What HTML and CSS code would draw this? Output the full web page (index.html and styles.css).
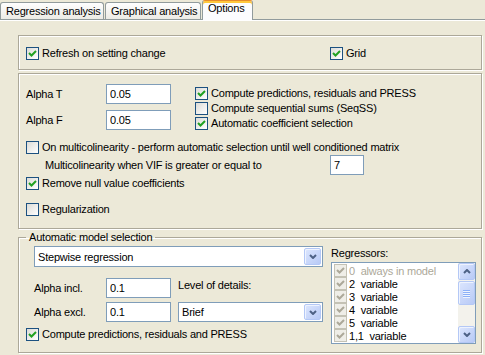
FILE: index.html
```html
<!DOCTYPE html>
<html lang="en">
<head>
    <meta charset="UTF-8">
    <title>Options</title>
    <link rel="stylesheet" href="styles.css">
</head>
<body>
    <div class="tabs">
        <div class="tab tab-reg">Regression analysis</div>
        <div class="tab tab-graph">Graphical analysis</div>
        <div class="tab tab-options active">Options</div>
    </div>

    <div class="panel">
        <!-- 上段 -->
        <div class="group group-top">
            <label class="check check-refresh"><span class="cb"><svg viewBox="0 0 11 11"><path d="M2 5l2.5 2.5L9 3" /></svg></span>Refresh on setting change</label>
            <label class="check"><span class="cb"><svg viewBox="0 0 11 11"><path d="M2 5l2.5 2.5L9 3" /></svg></span>Grid</label>
        </div>

        <!-- 回帰の設定 -->
        <div class="group group-regr">
            <div class="alpha-row">
                <div class="alpha-col">
                    <div class="field-row">
                        <span class="field-label">Alpha T</span>
                        <input class="edit alpha-edit" type="text" value="0.05">
                    </div>
                    <div class="field-row">
                        <span class="field-label">Alpha F</span>
                        <input class="edit alpha-edit" type="text" value="0.05">
                    </div>
                </div>
                <div class="check-col">
                    <label class="check"><span class="cb"><svg viewBox="0 0 11 11"><path d="M2 5l2.5 2.5L9 3" /></svg></span>Compute predictions, residuals and PRESS</label>
                    <label class="check"><span class="cb"></span>Compute sequential sums (SeqSS)</label>
                    <label class="check"><span class="cb"><svg viewBox="0 0 11 11"><path d="M2 5l2.5 2.5L9 3" /></svg></span>Automatic coefficient selection</label>
                </div>
            </div>
            <label class="check multicol"><span class="cb"></span>On multicolinearity - perform automatic selection until well conditioned matrix</label>
            <div class="vif-row">
                <span class="vif-label">Multicolinearity when VIF is greater or equal to</span>
                <input class="edit vif-edit" type="text" value="7">
            </div>
            <label class="check remove-null"><span class="cb"><svg viewBox="0 0 11 11"><path d="M2 5l2.5 2.5L9 3" /></svg></span>Remove null value coefficients</label>
            <label class="check regular"><span class="cb"></span>Regularization</label>
        </div>

        <!-- 自動モデル選択 -->
        <fieldset class="group-model">
            <legend>Automatic model selection</legend>
            <div class="model-left">
                <div class="combo combo-method">
                    <span class="combo-text">Stepwise regression</span>
                    <span class="sb-btn combo-btn"><svg viewBox="0 0 8 5"><path d="M1 1l3 3l3 -3" /></svg></span>
                </div>
                <div class="field-row model-row first">
                    <span class="field-label model-label">Alpha incl.</span>
                    <input class="edit alpha-edit" type="text" value="0.1">
                    <span class="details-label">Level of details:</span>
                </div>
                <div class="field-row model-row">
                    <span class="field-label model-label">Alpha excl.</span>
                    <input class="edit alpha-edit" type="text" value="0.1">
                    <div class="combo combo-details">
                        <span class="combo-text">Brief</span>
                        <span class="sb-btn combo-btn"><svg viewBox="0 0 8 5"><path d="M1 1l3 3l3 -3" /></svg></span>
                    </div>
                </div>
                <label class="check compute-model"><span class="cb"><svg viewBox="0 0 11 11"><path d="M2 5l2.5 2.5L9 3" /></svg></span>Compute predictions, residuals and PRESS</label>
            </div>
            <div class="model-right">
                <div class="regr-label">Regressors:</div>
                <div class="listbox">
                    <div class="list-items">
                        <div class="list-item fixed"><span class="cb cb-grey"><svg viewBox="0 0 11 11"><path d="M2 5l2.5 2.5L9 3" /></svg></span>0  always in model</div>
                        <div class="list-item"><span class="cb cb-grey"><svg viewBox="0 0 11 11"><path d="M2 5l2.5 2.5L9 3" /></svg></span>2  variable</div>
                        <div class="list-item"><span class="cb cb-grey"><svg viewBox="0 0 11 11"><path d="M2 5l2.5 2.5L9 3" /></svg></span>3  variable</div>
                        <div class="list-item"><span class="cb cb-grey"><svg viewBox="0 0 11 11"><path d="M2 5l2.5 2.5L9 3" /></svg></span>4  variable</div>
                        <div class="list-item"><span class="cb cb-grey"><svg viewBox="0 0 11 11"><path d="M2 5l2.5 2.5L9 3" /></svg></span>5  variable</div>
                        <div class="list-item"><span class="cb cb-grey"><svg viewBox="0 0 11 11"><path d="M2 5l2.5 2.5L9 3" /></svg></span>1,1  variable</div>
                    </div>
                    <div class="scrollbar">
                        <span class="sb-btn"><svg viewBox="0 0 8 5"><path d="M1 4l3 -3l3 3" /></svg></span>
                        <span class="sb-btn sb-thumb"><i></i><i></i><i></i><i></i></span>
                        <span class="sb-track"></span>
                        <span class="sb-btn"><svg viewBox="0 0 8 5"><path d="M1 1l3 3l3 -3" /></svg></span>
                    </div>
                </div>
            </div>
        </fieldset>
    </div>
</body>
</html>
```

FILE: styles.css
```css
/* 全体 */
* {
    box-sizing: border-box;
}
body {
    margin: 0;
    width: 485px;
    height: 355px;
    overflow: hidden;
    background-color: #ECE9D8; /* XPのベージュ */
    font-family: "Liberation Sans", Arial, sans-serif;
    font-size: 11px;
    letter-spacing: -0.2px;
    color: #000;
}

/* タブ */
.tabs {
    display: flex;
    align-items: flex-end;
    gap: 1px;
    height: 19px;
    position: relative;
    z-index: 1;
}
.tab {
    height: 17px;
    border: 1px solid #919B9C;
    border-bottom: none;
    border-radius: 3px 3px 0 0;
    background: linear-gradient(#FEFEFE, #ECEBE5);
    padding-left: 5px;
    line-height: 16px;
    white-space: nowrap;
}
.tab-reg {
    width: 104px;
}
.tab-graph {
    width: 96px;
}
.tab.active {
    width: 51px;
    height: 20px;
    margin-bottom: -1px;
    border-top-color: #E68B2C;
    box-shadow: inset 0 2px #FFC83C;
    background: #FCFCFE;
    line-height: 15px;
}

/* パネル */
.panel {
    border-top: 1px solid #919B9C;
    box-shadow: inset 0 1px #fff;
    padding: 15px 0 0 18px;
    height: 336px;
}
.group, .group-model {
    width: 464px;
    border: 1px solid #ACA899;
    box-shadow: 1px 1px 0 #fff, inset 1px 1px 0 #fff;
}

/* チェックボックス */
.check {
    display: flex;
    align-items: center;
    gap: 3px;
    height: 13px;
    line-height: 13px;
    white-space: nowrap;
}
.cb {
    flex: none;
    width: 13px;
    height: 13px;
    border: 1px solid #1C5180;
    background: linear-gradient(135deg, #DCDCD7, #FFFFFF);
    display: flex;
}
.cb svg {
    width: 11px;
    height: 11px;
}
.cb path {
    fill: none;
    stroke: #21A121;
    stroke-width: 2;
}
.cb-grey {
    border-color: #C4C2B5;
    background: #EFEEE8;
}
.cb-grey path {
    stroke: #ACA899;
}

/* 入力欄 */
.edit {
    flex: none;
    height: 20px;
    margin: 0;
    border: 1px solid #7F9DB9;
    background: #fff;
    padding: 0 3px;
    font: inherit;
    letter-spacing: inherit;
    color: #000;
    outline: none;
}
.alpha-edit {
    width: 65px;
}
.field-row {
    display: flex;
    align-items: center;
    height: 20px;
}
.field-label {
    flex: none;
    width: 80px;
}

/* 上段グループ */
.group-top {
    height: 35px;
    display: flex;
    align-items: center;
    padding: 1px 0 0 7px;
}
.check-refresh {
    width: 304px;
}

/* 回帰グループ */
.group-regr {
    height: 156px;
    margin-top: 3px;
    padding: 10px 0 0 7px;
    display: flex;
    flex-direction: column;
}
.alpha-row {
    display: flex;
    height: 46px;
}
.alpha-col {
    display: flex;
    flex-direction: column;
    gap: 6px;
}
.check-col {
    margin-left: 24px;
    padding-top: 3px;
    display: flex;
    flex-direction: column;
    gap: 2px;
}
.multicol {
    margin-top: 11px;
}
.vif-row {
    display: flex;
    align-items: center;
    height: 20px;
    margin-top: 1px;
    padding-left: 19px;
}
.vif-label {
    width: 285px;
}
.vif-edit {
    width: 34px;
}
.remove-null {
    margin-top: 2px;
}
.regular {
    margin-top: 13px;
}

/* 自動モデル選択 */
.group-model {
    margin: 2px 0 0;
    padding: 0 0 8px 7px;
    display: flex;
    min-width: 0;
}
.group-model legend {
    padding: 0 3px;
    line-height: 13px;
}
.model-left {
    flex: none;
    width: 297px;
}
.combo {
    height: 21px;
    border: 1px solid #7F9DB9;
    background: #fff;
    display: flex;
    align-items: center;
    padding: 1px;
}
.combo-method {
    width: 289px;
    margin: 2px 0 0 8px;
}
.combo-text {
    flex: 1;
    padding-left: 2px;
}
.model-row {
    margin: 4px 0 0 8px;
}
.model-row.first {
    margin-top: 11px;
    align-items: flex-start;
}
.model-row.first .field-label {
    align-self: center;
}
.model-label {
    width: 72px;
}
.details-label {
    margin-left: 7px;
    line-height: 14px;
}
.combo-details {
    width: 145px;
    height: 20px;
    margin-left: 7px;
}
.compute-model {
    margin-top: 6px;
}
.model-right {
    flex: none;
    width: 145px;
    margin-left: 8px;
}
.regr-label {
    margin-top: 2px;
    line-height: 14px;
}

/* リストボックス */
.listbox {
    height: 82px;
    margin-top: 2px;
    border: 1px solid #7F9DB9;
    background: #fff;
    display: flex;
    overflow: hidden;
}
.list-items {
    flex: 1;
    padding: 1px 0 0 2px;
}
.list-item {
    display: flex;
    align-items: center;
    gap: 2px;
    height: 13px;
    white-space: pre;
}
.list-item.fixed {
    color: #ACA899;
}

/* スクロールバー・コンボのボタン */
.sb-btn {
    flex: none;
    width: 17px;
    height: 17px;
    border: 1px solid #B4C8F6;
    border-radius: 2px;
    background: linear-gradient(135deg, #DCE6FE, #B8CAF6);
    box-shadow: inset 1px 1px 0 #EEF3FE;
    display: flex;
    align-items: center;
    justify-content: center;
}
.sb-btn svg {
    width: 8px;
    height: 5px;
}
.sb-btn path {
    fill: none;
    stroke: #4D6185;
    stroke-width: 2;
}
.combo-btn {
    height: 100%;
}
.scrollbar {
    width: 17px;
    display: flex;
    flex-direction: column;
    background: #F3F2EC;
}
.sb-thumb {
    height: 24px;
    margin-top: 1px;
    flex-direction: column;
    gap: 1px;
}
.sb-thumb i {
    width: 7px;
    height: 1px;
    background: #8CB0F8;
    box-shadow: 0 1px 0 #EEF4FE;
}
.sb-track {
    flex: 1;
}
```
